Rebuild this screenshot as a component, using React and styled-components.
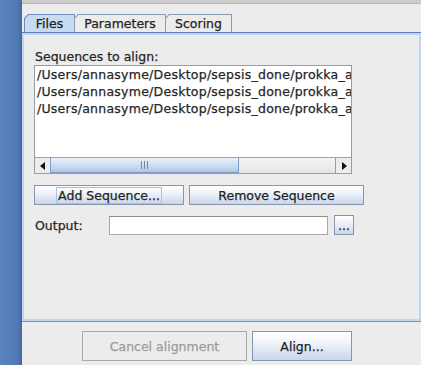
import styled, { createGlobalStyle } from 'styled-components'

const GlobalStyle = createGlobalStyle`
  html, body {
    margin: 0;
    padding: 0;
    overflow: hidden;
    background: #ececec;
  }
  body {
    font-family: "DejaVu Sans", "Liberation Sans", sans-serif;
    font-size: 12.5px;
    color: #262626;
    -webkit-text-stroke: 0.25px currentColor;
  }
`

const Screen = styled.div`
  display: flex;
  width: 421px;
  height: 365px;
`

const Desktop = styled.div`
  width: 22px;
  flex-shrink: 0;
  background: linear-gradient(90deg, #5a83c0 0%, #5279b6 80%, #43679f 100%);
`

const Window = styled.div`
  flex: 1;
  display: flex;
  flex-direction: column;
  background: #ececec;
  min-width: 0;
`

const TitleEdge = styled.div`
  height: 3px;
  background: #cdcdcd;
  border-bottom: 1px solid #b4b4b4;
`

const TabsRow = styled.div`
  display: flex;
  align-items: flex-end;
  padding: 10px 0 0 2px;
  border-bottom: 1px solid #5c7fbb;
`

const Tab = styled.div`
  width: ${({ $w }) => $w}px;
  height: 18px;
  margin-left: -1px;
  padding: 1px 1px 0 1px;
  box-sizing: border-box;
  background: ${({ $active }) => ($active ? '#6b8cc0' : '#8a9bb2')};
  clip-path: polygon(4px 0, 100% 0, 100% 100%, 0 100%, 0 4px);
  &:first-child {
    margin-left: 0;
  }
`

const TabFace = styled.div`
  height: 100%;
  display: flex;
  align-items: center;
  justify-content: center;
  font-size: 12.5px;
  color: #222;
  background: ${({ $active }) => ($active ? '#c7dcf1' : '#ececec')};
  clip-path: polygon(3.5px 0, 100% 0, 100% 100%, 0 100%, 0 3.5px);
`

const Pane = styled.div`
  height: 288px;
  box-sizing: border-box;
  border: 2px solid #c2d7ef;
  padding: 14px 0 0 10px;
  display: flex;
  flex-direction: column;
  position: relative;
  &::after {
    content: '';
    position: absolute;
    left: -2px;
    right: -2px;
    bottom: -3px;
    height: 1px;
    background: #8e8e8e;
  }
`

const Label = styled.div`
  height: 16px;
  line-height: 16px;
  padding-left: 1px;
  white-space: nowrap;
`

const ListBox = styled.div`
  width: 318px;
  height: 109px;
  box-sizing: border-box;
  border: 1px solid #9c9c9c;
  background: #fff;
  display: flex;
  flex-direction: column;
`

const Lines = styled.div`
  flex: 1;
  overflow: hidden;
  padding: 0 0 0 2px;
  letter-spacing: 0.25px;
`

const Line = styled.div`
  height: 17px;
  line-height: 17px;
  white-space: nowrap;
`

const HScroll = styled.div`
  height: 15px;
  display: flex;
  border-top: 1px solid #a3a3a3;
  background: #ebebeb;
`

const Arrow = styled.div`
  width: 15px;
  flex-shrink: 0;
  display: flex;
  align-items: center;
  justify-content: center;
  background: #ededed;
  border-left: ${({ $side }) => ($side === 'right' ? '1px solid #9c9c9c' : 'none')};
`

const Thumb = styled.div`
  width: 189px;
  box-sizing: border-box;
  border: 1px solid #7f9ec9;
  border-top: none;
  background: linear-gradient(180deg, #eaf1fa 0%, #d2e1f3 45%, #aec6e4 100%);
  display: flex;
  align-items: center;
  justify-content: center;
  gap: 2px;
`

const Grip = styled.span`
  width: 1px;
  height: 8px;
  background: #6f87a8;
`

const Track = styled.div`
  flex: 1;
  background: linear-gradient(180deg, #f4f4f4, #e4e4e4);
`

const ButtonRow = styled.div`
  display: flex;
  gap: 5px;
  margin-top: 11px;
`

const Button = styled.div`
  width: ${({ $w }) => $w}px;
  height: ${({ $h }) => $h || 20}px;
  margin-left: ${({ $ml }) => $ml || 0}px;
  box-sizing: border-box;
  display: flex;
  align-items: center;
  justify-content: center;
  border: 1px solid ${({ $disabled }) => ($disabled ? '#a8a8a8' : '#8595ad')};
  background: ${({ $disabled }) =>
    $disabled ? '#ececec' : 'linear-gradient(180deg, #ffffff 0%, #eef3fa 40%, #c9d7ea 100%)'};
  color: ${({ $disabled }) => ($disabled ? '#9b9b9b' : '#222')};
  font-size: 12.5px;
  white-space: nowrap;
`

const FocusRing = styled.span`
  border: 1px solid #a4c3e8;
  padding: 0 1px;
  line-height: 15px;
`

const OutputRow = styled.div`
  display: flex;
  align-items: center;
  margin-top: 10px;
`

const OutputLabel = styled.div`
  width: 74px;
  padding-left: 1px;
`

const TextField = styled.div`
  width: 219px;
  height: 19px;
  box-sizing: border-box;
  background: #fff;
  border: 1px solid #a8a8a8;
  border-top-color: #8a8a8a;
`

const Footer = styled.div`
  flex: 1;
  display: flex;
  justify-content: center;
  gap: 5px;
  padding: 10px 9px 0 0;
`

function ArrowIcon({ dir }) {
  return (
    <svg width="6" height="8" viewBox="0 0 6 8">
      {dir === 'left' ? <polygon points="5,0 5,8 0,4" fill="#111" /> : <polygon points="1,0 1,8 6,4" fill="#111" />}
    </svg>
  )
}

const path = '/Users/annasyme/Desktop/sepsis_done/prokka_annotation'

function App() {
  return (
    <>
      <GlobalStyle />
      <Screen>
        <Desktop />
        <Window>
          <TitleEdge />
          <TabsRow>
            <Tab $w={51} $active>
              <TabFace $active>Files</TabFace>
            </Tab>
            <Tab $w={92}>
              <TabFace>Parameters</TabFace>
            </Tab>
            <Tab $w={67}>
              <TabFace>Scoring</TabFace>
            </Tab>
          </TabsRow>
          <Pane>
            <Label>Sequences to align:</Label>
            <ListBox>
              <Lines>
                <Line>{path}</Line>
                <Line>{path}</Line>
                <Line>{path}</Line>
              </Lines>
              <HScroll>
                <Arrow $side="left">
                  <ArrowIcon dir="left" />
                </Arrow>
                <Thumb>
                  <Grip />
                  <Grip />
                  <Grip />
                </Thumb>
                <Track />
                <Arrow $side="right">
                  <ArrowIcon dir="right" />
                </Arrow>
              </HScroll>
            </ListBox>
            <ButtonRow>
              <Button $w={150}>
                <FocusRing>Add Sequence...</FocusRing>
              </Button>
              <Button $w={175}>Remove Sequence</Button>
            </ButtonRow>
            <OutputRow>
              <OutputLabel>Output:</OutputLabel>
              <TextField />
              <Button $w={20} $ml={6}>
                ...
              </Button>
            </OutputRow>
          </Pane>
          <Footer>
            <Button $w={165} $h={30} $disabled>
              Cancel alignment
            </Button>
            <Button $w={100} $h={30}>
              Align...
            </Button>
          </Footer>
        </Window>
      </Screen>
    </>
  )
}

export default App
